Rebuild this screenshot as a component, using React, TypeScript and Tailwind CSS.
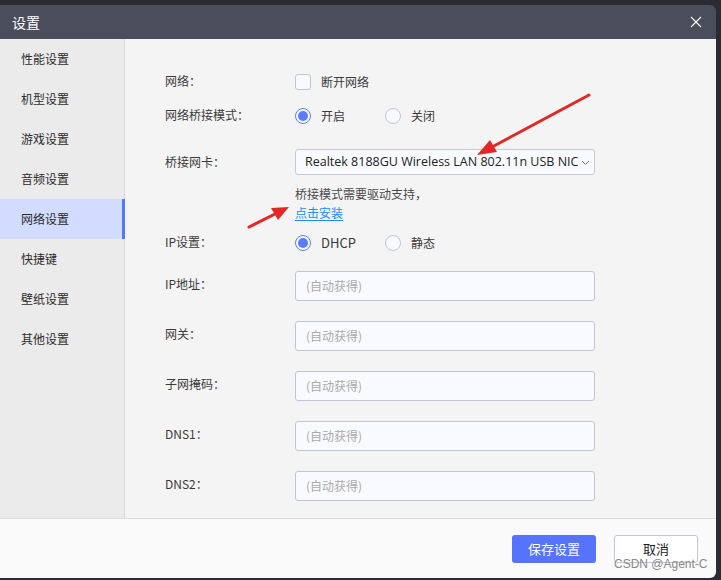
import { useState } from 'react'

const menu = ['性能设置', '机型设置', '游戏设置', '音频设置', '网络设置', '快捷键', '壁纸设置', '其他设置']

const font = { fontFamily: '"Noto Sans CJK SC", "Noto Sans", sans-serif' }

function Radio({ checked }: { checked?: boolean }) {
  return (
    <span
      className={
        'w-4 h-4 rounded-full border flex items-center justify-center bg-[#f8f9fd] ' +
        (checked ? 'border-[#5b7cff]' : 'border-[#c3c6d4]')
      }
    >
      {checked && <span className="w-[10px] h-[10px] rounded-full bg-[#5b7cff]" />}
    </span>
  )
}

function Field({ label }: { label: string }) {
  return (
    <div className="flex items-center h-[30px] mt-5">
      <div className="w-[130px] -mt-[5px]">{label}</div>
      <div className="w-[300px] h-[30px] rounded-[3px] border border-[#c2c4d6] bg-[#f9fafd] flex items-center px-[10px] text-[#aaaaaa]">
        (自动获得)
      </div>
    </div>
  )
}

export default function App() {
  const [active] = useState(4)

  return (
    <div className="w-[721px] h-[580px] bg-[#2b2c33] pt-[5px] relative overflow-hidden" style={font}>
      <div className="w-[716px] h-[573px] flex flex-col rounded-tr-[6px] rounded-br-[6px] overflow-hidden">
        {/* title bar */}
        <div className="h-[34px] bg-[#4a4d5c] flex items-center justify-between pl-3 pr-[14px] text-white">
          <span className="text-[14px]">设置</span>
          <svg width="12" height="12" viewBox="0 0 12 12" className="text-white">
            <path d="M1 1 L11 11 M11 1 L1 11" stroke="currentColor" strokeWidth="1.1" fill="none" />
          </svg>
        </div>

        {/* body */}
        <div className="flex h-[479px]">
          <div className="w-[125px] bg-[#ebebeb] border-r border-[#d8d8d8] text-[12px] text-[#2b2b2b]">
            {menu.map((m, i) => (
              <div
                key={m}
                className={
                  'h-10 flex items-center pl-[21px] ' +
                  (i === active ? 'bg-[#d2dcfe] border-r-[3px] border-[#5677fc] -mr-px' : '')
                }
              >
                {m}
              </div>
            ))}
          </div>

          <div className="flex-1 bg-[#f4f4f4] pl-[40px] pt-[31px] text-[12px] text-[#3a3a3a]">
            <div className="flex items-center h-6">
              <div className="w-[130px] -mt-[2px]">网络：</div>
              <span className="w-4 h-4 rounded-[3px] border border-[#c0c3d2] bg-[#f8f9fd]" />
              <span className="ml-[10px]">断开网络</span>
            </div>

            <div className="flex items-center h-6 mt-[10px]">
              <div className="w-[130px] -mt-[2px]">网络桥接模式：</div>
              <Radio checked />
              <span className="ml-[10px] w-[64px]">开启</span>
              <Radio />
              <span className="ml-[10px]">关闭</span>
            </div>

            <div className="flex items-center h-[26px] mt-[21px]">
              <div className="w-[130px]">桥接网卡：</div>
              <div className="w-[300px] h-[26px] rounded-[3px] border border-[#c6c8d8] bg-[#f9fafd] flex items-center pl-[9px] pr-[4px] text-[12.5px] text-[#222]" style={{ fontFamily: '"Open Sans", "Noto Sans", sans-serif' }}>
                <span className="flex-1 whitespace-nowrap overflow-hidden">Realtek 8188GU Wireless LAN 802.11n USB NIC</span>
                <svg width="9" height="9" viewBox="0 0 9 9" className="shrink-0">
                  <path d="M1 3 L4.5 6.5 L8 3" stroke="#777" strokeWidth="1" fill="none" />
                </svg>
              </div>
            </div>

            <div className="pl-[130px] mt-[9px] leading-[19px] text-[#4a4a4a]">
              <div>桥接模式需要驱动支持，</div>
              <div className="text-[#1a8cff] underline underline-offset-2">点击安装</div>
            </div>

            <div className="flex items-center h-6 mt-[9px]">
              <div className="w-[130px] -mt-[2px]">IP设置：</div>
              <Radio checked />
              <span className="ml-[10px] w-[64px] text-[13px]">DHCP</span>
              <Radio />
              <span className="ml-[10px]">静态</span>
            </div>

            <div className="-mt-[4px]">
              <Field label="IP地址：" />
              <Field label="网关：" />
              <Field label="子网掩码：" />
              <Field label="DNS1：" />
              <Field label="DNS2：" />
            </div>
          </div>
        </div>

        {/* footer */}
        <div className="flex-1 bg-[#fafafa] border-t border-[#dcdcdc] flex items-start justify-end pt-4 pr-[18px] gap-[18px] text-[13px]">
          <button className="w-[84px] h-[28px] rounded-[3px] bg-[#5673fb] text-white">保存设置</button>
          <button className="w-[84px] h-[28px] rounded-[3px] bg-white border border-[#c4c6d4] text-[#1e1e1e]">取消</button>
        </div>
      </div>

      {/* watermark */}
      <div className="absolute left-[614px] top-[555px] text-[12px] text-[#8a8a8a]" style={{ fontFamily: '"Liberation Sans", sans-serif' }}>
        CSDN @Agent-C
      </div>

      {/* red annotation arrows */}
      <svg className="absolute left-0 top-0 pointer-events-none" width="721" height="580">
        <path d="M589 95 L492 147" stroke="#e32626" strokeWidth="3" strokeLinecap="round" />
        <path d="M477 155 L490 140 L497 152 Z" fill="#e32626" />
        <path d="M249 227 L275 214" stroke="#e32626" strokeWidth="3" strokeLinecap="round" />
        <path d="M289 207 L271 208 L278 220 Z" fill="#e32626" />
      </svg>
    </div>
  )
}
